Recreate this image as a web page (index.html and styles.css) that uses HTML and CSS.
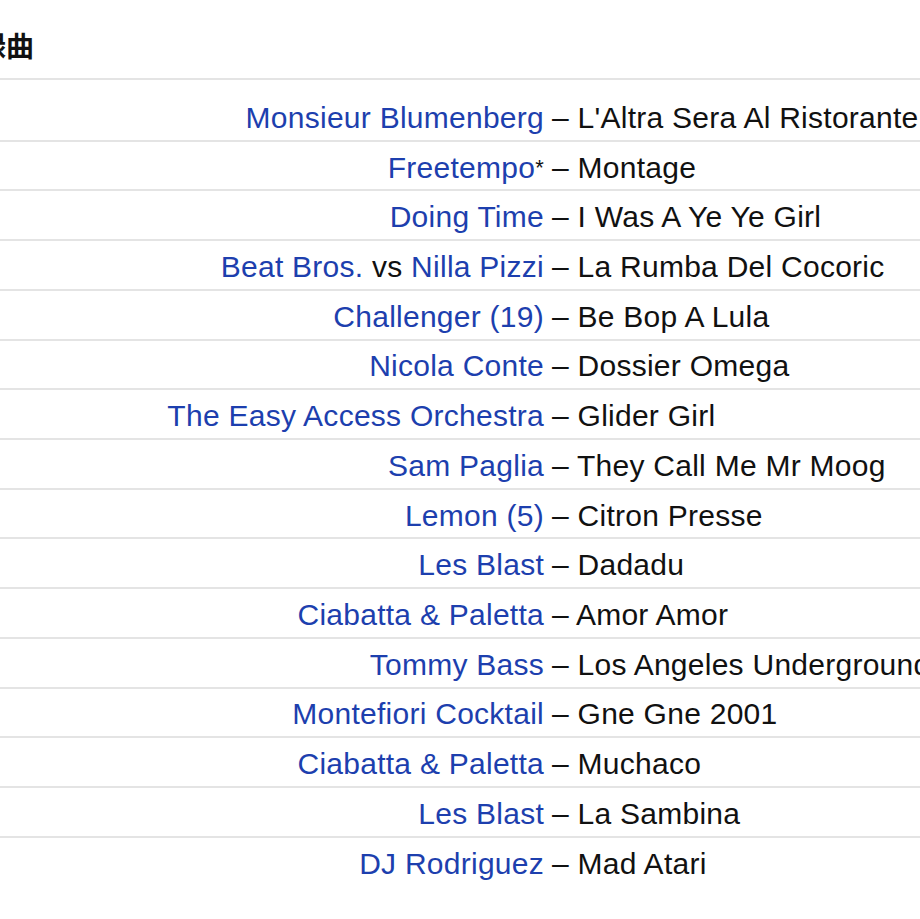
FILE: index.html
```html
<!DOCTYPE html>
<html lang="ja">
<head>
<meta charset="utf-8">
<title>収録曲</title>
<link rel="stylesheet" href="styles.css">
</head>
<body>
<section class="tracklist">
  <h2 class="heading"><span class="heading-text">収録曲</span></h2>
  <div class="tracks">
    <div class="track"><span class="artist"><a href="#">Monsieur Blumenberg</a></span><span class="title">– L'Altra Sera Al Ristorante</span></div>
    <div class="track"><span class="artist"><a href="#">Freetempo</a><span class="star">*</span></span><span class="title">– Montage</span></div>
    <div class="track"><span class="artist"><a href="#">Doing Time</a></span><span class="title">– I Was A Ye Ye Girl</span></div>
    <div class="track"><span class="artist"><a href="#">Beat Bros.</a> vs <a href="#">Nilla Pizzi</a></span><span class="title">– La Rumba Del Cocoric</span></div>
    <div class="track"><span class="artist"><a href="#">Challenger (19)</a></span><span class="title">– Be Bop A Lula</span></div>
    <div class="track"><span class="artist"><a href="#">Nicola Conte</a></span><span class="title">– Dossier Omega</span></div>
    <div class="track"><span class="artist"><a href="#">The Easy Access Orchestra</a></span><span class="title">– Glider Girl</span></div>
    <div class="track"><span class="artist"><a href="#">Sam Paglia</a></span><span class="title">– They Call Me Mr Moog</span></div>
    <div class="track"><span class="artist"><a href="#">Lemon (5)</a></span><span class="title">– Citron Presse</span></div>
    <div class="track"><span class="artist"><a href="#">Les Blast</a></span><span class="title">– Dadadu</span></div>
    <div class="track"><span class="artist"><a href="#">Ciabatta &amp; Paletta</a></span><span class="title">– Amor Amor</span></div>
    <div class="track"><span class="artist"><a href="#">Tommy Bass</a></span><span class="title">– Los Angeles Underground</span></div>
    <div class="track"><span class="artist"><a href="#">Montefiori Cocktail</a></span><span class="title">– Gne Gne 2001</span></div>
    <div class="track"><span class="artist"><a href="#">Ciabatta &amp; Paletta</a></span><span class="title">– Muchaco</span></div>
    <div class="track"><span class="artist"><a href="#">Les Blast</a></span><span class="title">– La Sambina</span></div>
    <div class="track"><span class="artist"><a href="#">DJ Rodriguez</a></span><span class="title">– Mad Atari</span></div>
  </div>
</section>
</body>
</html>
```

FILE: styles.css
```css
html, body {
  margin: 0;
  padding: 0;
  background: #ffffff;
  overflow: hidden;
}

body {
  font-family: "Liberation Sans", Arial, "Noto Sans CJK JP", sans-serif;
  color: #111111;
  width: 920px;
  height: 919px;
}

.tracklist {
  display: flex;
  flex-direction: column;
}

.heading {
  margin: 0;
  padding: 25px 0 13px 0;
  border-bottom: 2px solid #e4e4e4;
  font-family: "Noto Sans CJK JP", "Liberation Sans", sans-serif;
  font-weight: 700;
  font-size: 28px;
  line-height: 40px;
  white-space: nowrap;
  color: #111111;
}

.heading-text {
  display: block;
  margin-left: -50px;
}

.tracks {
  display: flex;
  flex-direction: column;
  margin-top: 12px;
}

.track {
  display: grid;
  grid-template-columns: 544px 1fr;
  height: 43.73px;
  padding-top: 4px;
  align-items: center;
  font-size: 30px;
  line-height: 34px;
  letter-spacing: 0.26px;
  white-space: nowrap;
}

.track + .track {
  border-top: 2px solid #e4e4e4;
}

.artist {
  text-align: right;
  color: #111111;
}

.artist a {
  color: #1d3fae;
  text-decoration: none;
}

.star {
  font-size: 22px;
  vertical-align: 3px;
}

.title {
  padding-left: 8px;
  color: #111111;
  overflow: hidden;
}
```
